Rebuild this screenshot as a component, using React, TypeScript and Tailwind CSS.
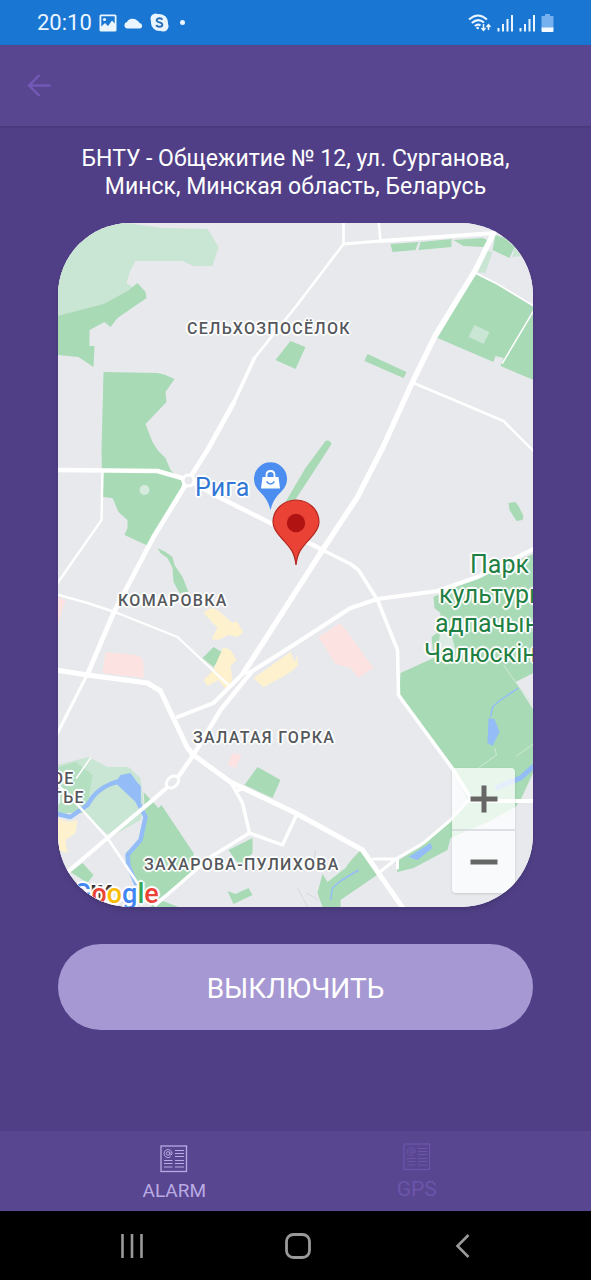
import type { ReactNode } from "react";

const MAP_W = 475;
const MAP_H = 684;

type Place = { text: string; x: number; y: number };

const districts: Place[] = [
  { text: "СЕЛЬХОЗПОСЁЛОК", x: 129, y: 106 },
  { text: "КОМАРОВКА", x: 60, y: 378 },
  { text: "ЗАЛАТАЯ ГОРКА", x: 135, y: 515 },
  { text: "ОЕ", x: -6, y: 556 },
  { text: "ТЬЕ", x: -6, y: 575 },
  { text: "ЗАХАРОВА-ПУЛИХОВА", x: 86, y: 642 },
];

const parkLines: Place[] = [
  { text: "Парк", x: 412, y: 342 },
  { text: "культуры", x: 381, y: 372 },
  { text: "адпачынку", x: 377, y: 401 },
  { text: "Чалюскінцаў", x: 366, y: 431 },
];

const halo =
  "[text-shadow:0_0_3px_#fff,0_0_2px_#fff,1px_1px_1px_#fff,-1px_-1px_1px_#fff,1px_-1px_1px_#fff,-1px_1px_1px_#fff,2px_0_1px_#fff,-2px_0_1px_#fff,0_2px_1px_#fff,0_-2px_1px_#fff]";

function MapLabel({ place, className }: { place: Place; className: string }) {
  return (
    <span
      className={`absolute -translate-y-1/2 whitespace-nowrap ${halo} ${className}`}
      style={{ left: `${(place.x / MAP_W) * 100}%`, top: `${(place.y / MAP_H) * 100}%` }}
    >
      {place.text}
    </span>
  );
}

function MapDrawing() {
  return (
    <svg
      viewBox="57 223 476 684"
      preserveAspectRatio="xMidYMid slice"
      className="block h-full w-full"
      aria-hidden="true"
    >
      <rect x="57" y="223" width="476" height="684" fill="#e8e9ed" />

      {/* pale green areas */}
      <g fill="#c9e5d3">
        <path d="M57 223H125L163 228 207 229 218 247 212 266 193 266 182 261 135 261 130 270 126 283 133 288 103 304 57 316Z" />
        <path d="M482 250 492 252 485 273 475 272ZM514 247 521 256 512 257Z" />
        <path d="M57 765 88 757 107 767 128 767 140 778 143 803 140 820 110 837 83 813 57 813Z" />
      </g>

      {/* parks */}
      <g fill="#a7dab5">
        <path d="M57 316 103 304 127 291 137 283 145 292 146 298 117 318 110 327 104 322 89 330V346H94L93 367 78 357 57 355Z" />
        <path d="M103 372 157 373 165 375 174 379 165 392 166 402 145 424 152 442 157 450 165 458 170 470 177 477 182 482 180 490 153 537 148 546 124 535 127 528 127 520 118 512 112 498 102 497 101 450Z" />
        <path d="M157 548 165 552 172 557 174 565 182 577 188 592 179 593 173 582 172 568 167 558 160 553Z" />
        <path d="M290 341 305 347 295 369 275 360Z" />
        <path d="M390 244 418 242 415 250 392 252ZM420 242 451 239V247L418 250ZM453 240 482 238 487 240 483 247 463 246ZM495 235 504 238 514 247 509 258 492 250Z" />
        <path d="M475 274 497 285 533 307V380L500 366 503 358 495 356 493 362 437 338Z" />
        <path d="M367 354 406 372 403 378 364 361Z" />
        <path d="M325 441Q329 439 331 444L313 472 290 507 285 502 305 468Z" />
        <path d="M508 503 515 502 518 506 523 516 522 520 516 521 509 510Z" />
        <path d="M484 574 533 554V772L520 800 515 807 487 822 450 838 447 850 413 868 397 872 395 862 420 847 450 820 467 800 453 770 399 697 400 673 433 658 431 637 439 631 440 613 434 608 433 597Z" />
        <path d="M360 850 378 874 340 900V907H322L317 893 322 874 327 882 345 868 350 861Z" />
        <path d="M143 792 158 808 161 805 193 853V873L150 905 125 865 126 852 138 843 145 815Z" />
        <path d="M57 768 75 762 92 775 88 800 83 813 57 813Z" opacity=".6" />
        <path d="M257 767 280 780 272 798 244 785ZM228 850 252 838V853L240 867ZM227 891 235 894 248 888 252 895 233 904ZM70 872 82 863 93 875 87 883ZM157 899 178 907H150Z" />
        <path d="M213 647 223 653 213 667 202 658Z" />
      </g>
      <circle cx="144" cy="490" r="5" fill="#d5ebdd" />
      <path d="M474 325 489 332 483 344 468 337Z" fill="#c9e5d3" />
      <path d="M441 615 447 620 455 650 448 658 438 648Z" fill="#dcebe3" />
      <path d="M515 682 533 673V710Z" fill="#e8e9ed" />

      {/* commercial areas */}
      <g fill="#fdf2cd">
        <path d="M203 613 210 608 217 610 232 623 236 621 243 632 237 637 228 635 218 640 211 639 217 628Z" />
        <path d="M223 647 230 650 236 660 230 666 232 680 226 690 218 680 207 686 203 680 213 670 217 660Z" />
        <path d="M253 678 290 652 294 662 297 655V666L290 672 280 678 263 687Z" />
        <path d="M57 818 68 822 77 820 75 833 65 840 67 853 57 850Z" />
      </g>
      <g fill="#fce3e2">
        <path d="M105 652 135 655Q143 656 143 665V678L102 673Z" />
        <path d="M57 597 65 600 57 625Z" />
        <path d="M318 637 340 623 349 635 373 668 358 678 350 668 335 664Z" />
        <path d="M232 753 241 755 235 768 227 765Z" />
      </g>

      {/* water */}
      <g fill="none" stroke="#94bdf8" strokeLinejoin="round">
        <path d="M57 814 70 817 87 805Q95 790 110 784L128 778 138 787V803L145 817 140 840 127 855 128 866 136 885" strokeWidth="4.500" />
        <path d="M540 760 520 778 495 788" strokeWidth="5" />
        <path d="M490 717 492 707 500 700 518 688M358 870 340 881 332 888 330 900" strokeWidth="1.5" />
      </g>
      <g fill="#94bdf8">
        <path d="M115 783 120 775 130 773 140 787V808L133 800Z" />
        <path d="M488 718 494 719 499 732 492 746 487 743Z" />
        <path d="M408 857 430 843 432 848 417 860Z" />
      </g>

      {/* footpaths */}
      <g fill="none" stroke="#cfe9d6" strokeWidth="1">
        <path d="M503 665 515 682 533 706M516 756 533 744M475 770 496 755 494 748" />
        <path d="M312 870 315 850M297 888 307 907M306 893 318 900" stroke="#d6d8dd" />
      </g>

      {/* roads */}
      <g fill="none" stroke="#fff" strokeLinejoin="round" strokeLinecap="round">
        <path d="M475 273 497 284 535 307M533 311 502 363M90 758 76 778" strokeWidth="1.5" />
        <path d="M343 220V244L295 307 254 358" strokeWidth="2.6" />
        <path d="M378 220 380 241" strokeWidth="2.6" />
        <path d="M413 383 463 404 503 421 535 453" strokeWidth="2.6" />
        <path d="M102 472 101 520 57 583" strokeWidth="2.4" />
        <path d="M55 594 87 603 117 613 177 637 230 687" strokeWidth="2.4" />
        <path d="M57 785 70 797 107 838 137 883" strokeWidth="2.6" />
        <path d="M343 244 380 241" strokeWidth="3" />
        <path d="M380 241 437 237 494 233" strokeWidth="4.2" />
        <path d="M254 358 233 403" strokeWidth="3.6" />
        <path d="M233 403 207 450 188 480 153 537 113 613 88 672" strokeWidth="4.8" />
        <path d="M86 676 55 737" strokeWidth="3" />
        <path d="M55 470 157 471 188 480 218 497 270 523 322 550" strokeWidth="4.6" />
        <path d="M322 550 350 564 358 570 377 600 397 650 398 695 453 770 470 798" strokeWidth="3.6" />
        <path d="M535 548 477 577 437 591 377 599 350 608 290 647 247 674" strokeWidth="4.2" />
        <path d="M493 233 475 270 435 335 412 382 383 446 357 497 322 550 243 673" strokeWidth="5.4" />
        <path d="M243 673 213 703 177 717" strokeWidth="4" />
        <path d="M250 673 220 710 193 755 179 775" strokeWidth="4.4" />
        <path d="M166 788 150 802 107 838 60 878" strokeWidth="4.2" />
        <path d="M55 670 87 675 147 683 160 691 187 748 193 755 230 782 295 813 362 850 403 909" strokeWidth="5" />
        <path d="M230 782 242 803 249 833 282 845 295 817M235 791 245 788M249 833 210 857 155 905" strokeWidth="3.4" />
        <path d="M470 801H535" strokeWidth="4.2" />
        <path d="M470 798 450 820 423 843 397 858 378 873M373 859H397V868" strokeWidth="3" />
      </g>
      <path d="M246 674 224 698" stroke="#e8e9ed" strokeWidth="1" />
      <circle cx="188" cy="480.500" r="5.500" fill="#e8e9ed" stroke="#fff" strokeWidth="3" />
      <ellipse cx="172" cy="782" rx="7" ry="5" transform="rotate(-40 172 782)" fill="#e8e9ed" stroke="#fff" strokeWidth="3" />

      {/* shop marker */}
      <path d="M270 510C267 498 262 495 257 489A16.500 16.500 0 1 1 283 489C278 495 273 498 270 510Z" fill="#4b8ef0" />
      <path d="M262 477H278L279.500 488.500H260.500Z" fill="#fff" />
      <path d="M266 478V475Q266 471 270 471T274 475V478" fill="none" stroke="#fff" strokeWidth="1.800" />
      <path d="M266 481.500Q270 486.500 274 481.500" fill="none" stroke="#4b8ef0" strokeWidth="1.500" />

      {/* alarm position */}
      <path
        d="M295.500 565C294 551 289 547 281 538Q272.500 529 272.500 522A23 22 0 0 1 318.500 522Q318.500 529 310 538C302 547 297 551 295.500 565Z"
        fill="#ea4335"
        stroke="#b3261e"
        strokeWidth="1.200"
      />
      <circle cx="295.500" cy="523" r="9.200" fill="#b11313" />
    </svg>
  );
}

function ZoomControl() {
  return (
    <div className="absolute right-[18px] bottom-[14px] flex w-[63px] flex-col divide-y-2 divide-gray-300/70 rounded-sm bg-white/75 shadow">
      <button type="button" aria-label="Приблизить" className="flex h-[63px] items-center justify-center">
        <svg viewBox="0 0 28 28" className="size-7" aria-hidden="true">
          <path d="M11.500 0.500H16.500V11.500H27.500V16.500H16.500V27.500H11.500V16.500H0.500V11.500H11.500Z" fill="#666" />
        </svg>
      </button>
      <button type="button" aria-label="Отдалить" className="flex h-[62px] items-center justify-center">
        <svg viewBox="0 0 28 28" className="size-7" aria-hidden="true">
          <path d="M0.500 11.500H27.500V16.500H0.500Z" fill="#666" />
        </svg>
      </button>
    </div>
  );
}

function GoogleMark() {
  return (
    <div className="absolute -bottom-[3px] left-[15px] h-8">
      <span className={`absolute top-0 left-[17px] text-[24px] leading-8 font-bold text-[#333] ${halo}`}>ІК</span>
      <span className={`relative text-[27px] leading-8 font-medium ${halo}`}>
        <span className="text-[#4285f4]">G</span>
        <span className="text-[#ea4335]">o</span>
        <span className="text-[#fbbc05]">o</span>
        <span className="text-[#4285f4]">g</span>
        <span className="text-[#34a853]">l</span>
        <span className="text-[#ea4335]">e</span>
      </span>
    </div>
  );
}

function AlarmMap() {
  return (
    <section
      aria-label="Карта"
      className="relative h-[684px] overflow-hidden rounded-[72px] bg-[#e8e9ed] shadow-md"
    >
      <MapDrawing />
      {districts.map((place) => (
        <MapLabel key={place.text} place={place} className="text-base font-medium tracking-[0.08em] text-[#55585c]" />
      ))}
      <MapLabel place={{ text: "Рига", x: 137, y: 265 }} className="text-[25px] text-[#3277d5]" />
      {parkLines.map((place) => (
        <MapLabel key={place.text} place={place} className="text-[25px] text-[#1f8043]" />
      ))}
      <GoogleMark />
      <ZoomControl />
    </section>
  );
}

function SignalIcon() {
  return (
    <svg viewBox="0 0 16 18" className="h-[18px] w-4" aria-hidden="true">
      <path d="M1.500 14V17.500M6 10V17.500M10.500 5V17.500M15 1V17.500" stroke="#eaf5ff" strokeWidth="2" />
    </svg>
  );
}

function StatusBar() {
  return (
    <div className="flex h-[45px] items-center justify-between bg-[#1976d3] pr-[37px] pl-[37px] text-[#eaf5ff]">
      <div className="flex items-center gap-[7px]">
        <span className="text-[22px]">20:10</span>
        <svg viewBox="0 0 18 18" className="size-[18px]" aria-hidden="true">
          <path
            fill="currentColor"
            fillRule="evenodd"
            d="M2 0.500H16Q17.500 0.500 17.500 2V16Q17.500 17.500 16 17.500H2Q0.500 17.500 0.500 16V2Q0.500 0.500 2 0.500ZM2.300 2.300V12.500L6 9 9 12 13 6.500 15.700 9.500V2.300Z"
          />
          <circle cx="5.500" cy="5.500" r="1.600" fill="currentColor" />
        </svg>
        <svg viewBox="0 0 19 12" className="h-3 w-[19px]" aria-hidden="true">
          <path d="M3.500 11.500A3.300 3.300 0 0 1 3 5 6 5.500 0 0 1 13 3.500 4 4 0 0 1 15.500 6 2.800 2.800 0 0 1 16 11.500Z" fill="currentColor" />
        </svg>
        <svg viewBox="0 0 20 20" className="size-[19px]" aria-hidden="true">
          <circle cx="10" cy="10" r="9" fill="currentColor" />
          <circle cx="6" cy="6" r="5.500" fill="currentColor" />
          <circle cx="14" cy="14" r="5.500" fill="currentColor" />
          <path
            d="M13 7.200Q12.500 5.500 10 5.500T7 7.500Q7 9 10 9.800T13 12.300Q13 14.500 10 14.500T6.800 12.500"
            fill="none"
            stroke="#2b6fb8"
            strokeWidth="2"
          />
        </svg>
        <span className="ml-1 size-[5px] rounded-full bg-current" />
      </div>
      <div className="flex items-center gap-[6px]">
        <svg viewBox="0 0 23 18" className="h-[18px] w-[23px]" fill="none" stroke="#eaf5ff" strokeWidth="2" aria-hidden="true">
          <path d="M1 5.500Q10 -2.500 19 5.500M3.800 9Q10 3.500 16 8.500M6.800 12Q10 9.500 12.500 11.500" />
          <circle cx="9.700" cy="14" r="1.300" fill="#eaf5ff" stroke="none" />
          <path d="M15.500 10V16M13.500 14 15.500 16.300 17.500 14M20.500 16V11M18.500 13 20.500 10.700 22.500 13" strokeWidth="1.500" />
        </svg>
        <SignalIcon />
        <SignalIcon />
        <svg viewBox="0 0 13 18" className="h-[18px] w-[13px]" aria-hidden="true">
          <path d="M4 0H9V2H12Q12.500 2 12.500 3V14H0.500V3Q0.500 2 1 2H4Z" fill="#77b0ee" />
          <path d="M0.500 13.500H12.500V17Q12.500 18 11.500 18H1.500Q0.500 18 0.500 17Z" fill="#f4faff" />
        </svg>
      </div>
    </div>
  );
}

function ArticleIcon() {
  return (
    <svg viewBox="0 0 28 28" className="size-7" fill="none" stroke="currentColor" aria-hidden="true">
      <rect x="1" y="1" width="25.500" height="25.500" strokeWidth="1.300" />
      <path d="M15 5.500H24M15 8.500H24M15 11.500H24M15 15.500H24M15 18.500H24M15 22H24M4 15.500H12.500M4 18.500H12.500M4 22H12.500" strokeWidth="1.100" />
      <circle cx="8" cy="8.500" r="1.800" />
      <path d="M9.800 6.500V9.500Q11 11 12 9V8A4 4 0 1 0 10.500 11.700" />
    </svg>
  );
}

function Tab({ label, className }: { label: string; className: string }): ReactNode {
  return (
    <a href={`#${label.toLowerCase()}`} className={`flex flex-col items-center ${className}`}>
      <ArticleIcon />
      <span className="leading-9">{label}</span>
    </a>
  );
}

export default function App() {
  return (
    <div className="flex min-h-screen flex-col bg-[#503f86] font-[Roboto,'Noto_Sans',sans-serif]">
      <StatusBar />
      <header className="flex h-[81px] items-center bg-[#584690] px-[26px] shadow">
        <button type="button" aria-label="Назад" className="text-[#7259b5]">
          <svg viewBox="0 0 26 26" className="size-[26px]" fill="none" stroke="currentColor" strokeWidth="2.400" aria-hidden="true">
            <path d="M13.500 2 3 12.500 13.500 23M3.500 12.500H24.500" />
          </svg>
        </button>
      </header>

      <main className="flex flex-1 flex-col px-[58px] pt-[19px]">
        <h1 className="mb-[22px] text-center text-[23px] leading-7 text-white">
          БНТУ - Общежитие № 12, ул. Сурганова, Минск, Минская область, Беларусь
        </h1>
        <AlarmMap />
        <button
          type="button"
          className="mt-[37px] h-[86px] rounded-full bg-[#a698d3] pt-[3px] text-[28px] text-white"
        >
          ВЫКЛЮЧИТЬ
        </button>
      </main>

      <nav className="grid h-20 grid-cols-2 bg-[#584690] px-[53px]">
        <Tab label="ALARM" className="pt-[14px] text-[19px] text-[#b9aae4]" />
        <Tab label="GPS" className="pt-3 text-[21px] text-[#6c55aa]" />
      </nav>

      <div className="flex h-[69px] items-center justify-between bg-black pr-[114px] pl-[118px] text-[#999]">
        <button type="button" aria-label="Недавние">
          <svg viewBox="0 0 28 28" className="size-7" stroke="currentColor" strokeWidth="2.600" aria-hidden="true">
            <path d="M4.500 2V26M14 2V26M23.500 2V26" />
          </svg>
        </button>
        <button type="button" aria-label="Домой">
          <svg viewBox="0 0 28 28" className="size-7" fill="none" stroke="currentColor" strokeWidth="2.800" aria-hidden="true">
            <rect x="2.500" y="2.500" width="23" height="23" rx="7" />
          </svg>
        </button>
        <button type="button" aria-label="Назад в системе">
          <svg viewBox="0 0 28 28" className="size-7" fill="none" stroke="currentColor" strokeWidth="2.600" aria-hidden="true">
            <path d="M19.500 3 8.500 14 19.500 25" />
          </svg>
        </button>
      </div>
    </div>
  );
}
